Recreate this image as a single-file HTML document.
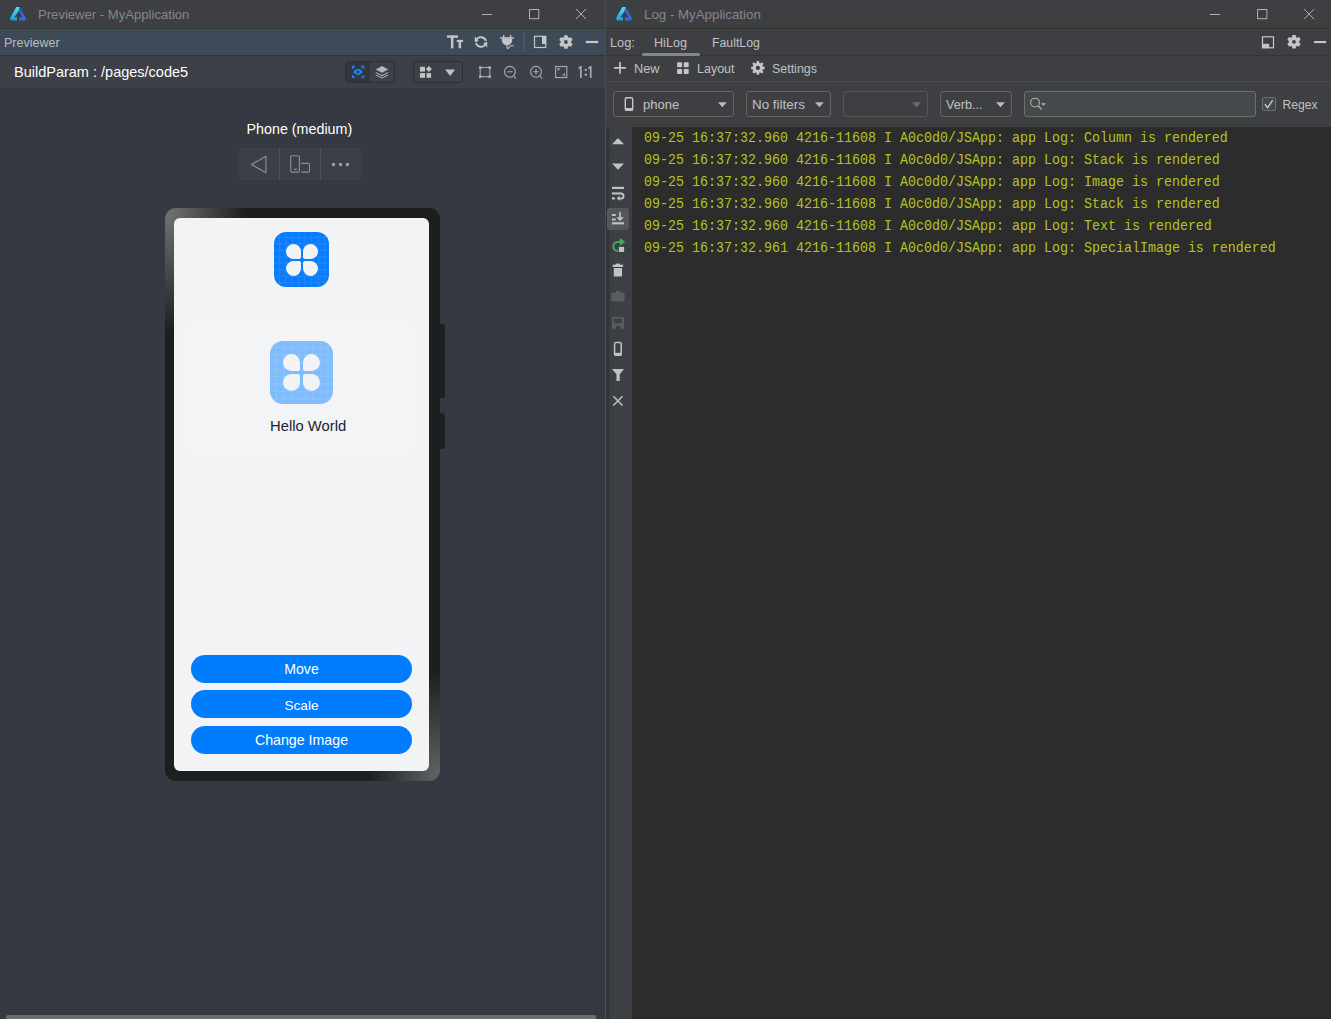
<!DOCTYPE html>
<html><head><meta charset="utf-8">
<style>
*{margin:0;padding:0;box-sizing:border-box}
html,body{width:1331px;height:1019px;overflow:hidden;background:#353941;font-family:"Liberation Sans",sans-serif}
.a{position:absolute}
.t{position:absolute;white-space:pre;line-height:1}
svg{position:absolute;left:0;top:0;overflow:visible}
.ui{color:#c0c2c4}
.lg{position:absolute;left:644px;height:22px;font-family:"Liberation Mono",monospace;font-size:13.333px;line-height:22px;color:#b3c421;white-space:pre;transform:scaleY(1.1);transform-origin:0 14px}
</style></head><body>
<!-- LEFT WINDOW -->
<div class="a" style="left:0;top:0;width:605px;height:28px;background:#3d3f43"></div>
<div class="a" style="left:0;top:28px;width:605px;height:27px;background:#3e4a57"></div>
<div class="a" style="left:0;top:27.5px;width:605px;height:1px;background:#303a2e"></div>
<div class="a" style="left:0;top:55px;width:605px;height:1px;background:#30343a"></div>
<div class="a" style="left:0;top:56px;width:605px;height:32px;background:#3d4047"></div>
<div class="a" style="left:0;top:88px;width:605px;height:931px;background:#353941"></div>
<div class="t" style="left:38px;top:8px;font-size:13.1px;color:#85878a">Previewer - MyApplication</div>
<div class="t" style="left:4px;top:37px;font-size:12.5px;color:#b9bcbf">Previewer</div>
<div class="t" style="left:14px;top:65px;font-size:14.5px;color:#ffffff">BuildParam : /pages/code5</div>
<div class="t" style="left:246.5px;top:121.5px;font-size:14.3px;color:#ffffff">Phone (medium)</div>
<!-- toolbar groups -->
<div class="a" style="left:345px;top:61px;width:50px;height:22px;border:1px solid #2c2f34;border-radius:4px;background:#3d4047;overflow:hidden"><div class="a" style="left:0;top:0;width:24px;height:20px;background:#33363c"></div></div>
<div class="a" style="left:413px;top:61px;width:50px;height:22px;border:1px solid #2c2f34;border-radius:4px"></div>
<!-- device bar -->
<div class="a" style="left:239px;top:148px;width:122px;height:32px;background:#3b3f46"></div>
<div class="a" style="left:279px;top:148px;width:1px;height:32px;background:#4c5058"></div>
<div class="a" style="left:320px;top:148px;width:1px;height:32px;background:#4c5058"></div>
<!-- scrollbar -->
<div class="a" style="left:6px;top:1015px;width:590px;height:6px;background:#6a6c6f;border-radius:2px 2px 0 0"></div>
<!-- divider -->
<div class="a" style="left:605px;top:0;width:1px;height:1019px;background:#4a4d50"></div>
<div class="a" style="left:606px;top:0;width:4px;height:1019px;background:#35373a"></div>

<!-- RIGHT WINDOW -->
<div class="a" style="left:606px;top:0;width:725px;height:127px;background:#3d3f43"></div>
<div class="a" style="left:606px;top:28px;width:725px;height:1px;background:#31382c"></div>
<div class="a" style="left:606px;top:55px;width:725px;height:1px;background:#31382c"></div>
<div class="a" style="left:606px;top:81px;width:725px;height:1px;background:#4a4b42"></div>
<div class="a" style="left:606px;top:127px;width:2.5px;height:892px;background:#333539"></div><div class="a" style="left:608.5px;top:127px;width:1.5px;height:892px;background:#393b3f"></div>
<div class="a" style="left:610px;top:127px;width:22px;height:892px;background:#3c3f44"></div>
<div class="a" style="left:607px;top:208px;width:22px;height:22px;background:#54575a;border-radius:3px"></div>
<div class="a" style="left:632px;top:127px;width:699px;height:892px;background:#2c2c2c"></div>
<div class="t" style="left:644px;top:8px;font-size:13.3px;color:#85878a">Log - MyApplication</div>
<div class="t ui" style="left:610px;top:37px;font-size:12.8px">Log:</div>
<div class="t ui" style="left:654px;top:37px;font-size:12.6px">HiLog</div>
<div class="a" style="left:642px;top:53px;width:58px;height:3px;background:#85888b;border-radius:2px"></div>
<div class="t ui" style="left:712px;top:37px;font-size:12.3px">FaultLog</div>
<div class="t ui" style="left:634px;top:63px;font-size:12.8px">New</div>
<div class="t ui" style="left:697px;top:63px;font-size:12.5px">Layout</div>
<div class="t ui" style="left:772px;top:63px;font-size:12.45px">Settings</div>

<!-- filter boxes -->
<div class="a" style="left:613px;top:91px;width:121px;height:26px;border:1px solid #62665e;border-radius:3px"></div>
<div class="t ui" style="left:643px;top:98px;font-size:13px">phone</div>
<div class="a" style="left:746px;top:91px;width:85px;height:26px;border:1px solid #62665e;border-radius:3px"></div>
<div class="t ui" style="left:752px;top:98px;font-size:13.4px">No filters</div>
<div class="a" style="left:843px;top:91px;width:85px;height:26px;border:1px solid #55584f;border-radius:3px"></div>
<div class="a" style="left:940px;top:91px;width:72px;height:26px;border:1px solid #62665e;border-radius:3px"></div>
<div class="t ui" style="left:946px;top:99px;font-size:12.6px">Verb...</div>
<div class="a" style="left:1024px;top:91px;width:232px;height:26px;border:1px solid #6b7265;border-radius:3px;background:#45494b"></div>
<div class="a" style="left:1262px;top:97px;width:14px;height:14px;border:1px solid #6d7168;border-radius:2px;background:#45484a"></div>
<div class="t ui" style="left:1282.5px;top:99px;font-size:12.1px">Regex</div>

<!-- log text -->
<div class="lg" style="top:128px">09-25 16:37:32.960 4216-11608 I A0c0d0/JSApp: app Log: Column is rendered</div>
<div class="lg" style="top:150px">09-25 16:37:32.960 4216-11608 I A0c0d0/JSApp: app Log: Stack is rendered</div>
<div class="lg" style="top:172px">09-25 16:37:32.960 4216-11608 I A0c0d0/JSApp: app Log: Image is rendered</div>
<div class="lg" style="top:194px">09-25 16:37:32.960 4216-11608 I A0c0d0/JSApp: app Log: Stack is rendered</div>
<div class="lg" style="top:216px">09-25 16:37:32.960 4216-11608 I A0c0d0/JSApp: app Log: Text is rendered</div>
<div class="lg" style="top:238px">09-25 16:37:32.961 4216-11608 I A0c0d0/JSApp: app Log: SpecialImage is rendered</div>

<!-- PHONE -->
<div class="a" style="left:440px;top:324px;width:5px;height:74px;background:#1f2021;border-radius:0 3px 3px 0"></div>
<div class="a" style="left:440px;top:413px;width:5px;height:36px;background:#1f2021;border-radius:0 3px 3px 0"></div>
<div class="a" style="left:165px;top:208px;width:274.5px;height:573px;border-radius:11px;background:radial-gradient(ellipse 80px 125px at 0px 0px,#747577 0%,rgba(29,30,32,0) 100%),radial-gradient(ellipse 70px 110px at 274px 573px,#646567 0%,rgba(29,30,32,0) 100%),#1d1e20"></div>
<div class="a" style="left:174px;top:218px;width:255px;height:553px;border-radius:6px;background:#f1f3f5"></div>
<div class="a" style="left:186px;top:322px;width:231px;height:133px;border-radius:12px;background:#f3f4f6"></div>
<div class="t" style="left:270px;top:419px;font-size:14.8px;color:#182431">Hello World</div>
<div class="a" style="left:191px;top:655px;width:221px;height:28px;border-radius:14px;background:#007dff"></div>
<div class="a" style="left:191px;top:690px;width:221px;height:28px;border-radius:14px;background:#007dff"></div>
<div class="a" style="left:191px;top:726px;width:221px;height:28px;border-radius:14px;background:#007dff"></div>
<div class="t" style="left:191px;top:662px;width:221px;text-align:center;font-size:14.1px;color:#fff">Move</div>
<div class="t" style="left:191px;top:699px;width:221px;text-align:center;font-size:13.6px;color:#fff">Scale</div>
<div class="t" style="left:191px;top:733px;width:221px;text-align:center;font-size:14.2px;color:#fff">Change Image</div>

<!-- app icons -->
<div class="a" style="left:274px;top:232px;width:55px;height:55px;border-radius:12px;background:#0a7dfe;overflow:hidden">
 <svg width="55" height="55"><g stroke="#3b97ff" stroke-width="0.8" opacity="0.55">
 <path d="M5.5 0V55M11.8 0V55M18.4 0V55M24.8 0V55M31 0V55M37.7 0V55M44.4 0V55M50.7 0V55M0 5.5H55M0 11.8H55M0 18.4H55M0 24.8H55M0 31H55M0 37.7H55M0 44.4H55M0 50.7H55"/></g></svg>
 <div class="a" style="left:11.7px;top:11.7px;width:15px;height:15px;background:#f1f3f5;border-radius:7.5px 7.5px 2px 7.5px"></div>
 <div class="a" style="left:28.7px;top:11.7px;width:15px;height:15px;background:#f1f3f5;border-radius:7.5px 7.5px 7.5px 2px"></div>
 <div class="a" style="left:11.7px;top:28.7px;width:15px;height:15px;background:#f1f3f5;border-radius:7.5px 2px 7.5px 7.5px"></div>
 <div class="a" style="left:28.7px;top:28.7px;width:15px;height:15px;background:#f1f3f5;border-radius:2px 7.5px 7.5px 7.5px"></div>
</div>
<div class="a" style="left:270px;top:341px;width:63px;height:63px;border-radius:13px;background:#7fbcfd;overflow:hidden">
 <svg width="63" height="63"><g stroke="#9ccbfd" stroke-width="0.8" opacity="0.6">
 <path d="M6.3 0V63M13.5 0V63M21 0V63M28.4 0V63M35.5 0V63M43 0V63M50.7 0V63M58 0V63M0 6.3H63M0 13.5H63M0 21H63M0 28.4H63M0 35.5H63M0 43H63M0 50.7H63M0 58H63"/></g></svg>
 <div class="a" style="left:13px;top:13px;width:17.3px;height:17.3px;background:#f1f3f5;border-radius:8.6px 8.6px 2px 8.6px"></div>
 <div class="a" style="left:32.8px;top:13px;width:17.3px;height:17.3px;background:#f1f3f5;border-radius:8.6px 8.6px 8.6px 2px"></div>
 <div class="a" style="left:13px;top:32.8px;width:17.3px;height:17.3px;background:#f1f3f5;border-radius:8.6px 2px 8.6px 8.6px"></div>
 <div class="a" style="left:32.8px;top:32.8px;width:17.3px;height:17.3px;background:#f1f3f5;border-radius:2px 8.6px 8.6px 8.6px"></div>
</div>

<!-- ICONS SVG OVERLAY -->
<svg width="1331" height="1019" viewBox="0 0 1331 1019">
 <defs>
  <linearGradient id="lg1" x1="0" y1="0" x2="0" y2="1"><stop offset="0" stop-color="#4fe3ec"/><stop offset="1" stop-color="#159fdb"/></linearGradient>
  <linearGradient id="lg2" x1="0" y1="0" x2="1" y2="1"><stop offset="0" stop-color="#1f5fd0"/><stop offset="1" stop-color="#3e6ee6"/></linearGradient>
 </defs>
 <!-- logos -->
 <g id="logo">
  <path d="M16.3 7.1H19.8L18.5 11.3L14.3 17.3H17V20.4H11.2L9.9 18.6Z" fill="url(#lg1)"/>
  <path d="M19.8 7.1L26 18.6L24.8 20.4H18.9V17.3H22.6L18.5 11.3Z" fill="url(#lg2)"/>
 </g>
 <use href="#logo" x="606" y="0"/>
 <!-- window controls left -->
 <g stroke="#b0b2b4" stroke-width="1" fill="none">
  <path d="M482 14.5H492.2"/>
  <rect x="529.5" y="9.5" width="9.3" height="9.2"/>
  <path d="M576 9L586 19M586 9L576 19"/>
  <path d="M1209.8 14.5H1220.2"/>
  <rect x="1257.6" y="9.5" width="9.3" height="9.2"/>
  <path d="M1304 9L1314.2 19.2M1314.2 9L1304 19.2"/>
 </g>
 <!-- previewer header icons -->
 <g fill="#c3c5c7">
  <rect x="447" y="35.4" width="11" height="2.4"/><rect x="450.9" y="35.4" width="2.5" height="13"/>
  <rect x="456.7" y="39.9" width="6.3" height="2.1"/><rect x="458.6" y="39.9" width="2.5" height="8.4"/>
 </g>
 <g stroke="#c3c5c7" stroke-width="1.8" fill="none">
  <path d="M476.3 40.2A5.2 5.2 0 0 1 486 41"/>
  <path d="M485.7 43.8A5.2 5.2 0 0 1 476 43"/>
 </g>
 <g fill="#c3c5c7">
  <path d="M474.8 36.2L478.6 40.9L474.8 42.2Z"/>
  <path d="M487.2 47.8L483.4 43.1L487.2 41.8Z"/>
  <rect x="503" y="35" width="1.4" height="3"/><rect x="509.9" y="35" width="1.4" height="3"/>
  <rect x="500" y="37.2" width="14" height="1.3"/>
  <path d="M501.8 38.3H512.2V40A5.2 5.2 0 0 1 501.8 40Z"/>
 </g>
 <path d="M507 43.5V47.4Q507.2 49.1 508.4 48.1L510.6 45.7H513.8" stroke="#c3c5c7" stroke-width="1.1" fill="none"/>
 <rect x="523.3" y="32" width="1" height="20" fill="#566170"/>
 <rect x="534.5" y="36.3" width="11.2" height="11.2" stroke="#c3c5c7" stroke-width="1.2" fill="none"/>
 <rect x="542" y="36" width="4.2" height="8" fill="#c3c5c7"/>
 <path id="gear" fill="#c3c5c7" fill-rule="evenodd" transform="translate(565.9 42)" d="M-2.07 -4.66 L-1.57 -6.82 L1.57 -6.82 L2.07 -4.66 L3.00 -4.13 L5.12 -4.77 L6.69 -2.05 L5.07 -0.53 L5.07 0.53 L6.69 2.05 L5.12 4.77 L3.00 4.13 L2.07 4.66 L1.57 6.82 L-1.57 6.82 L-2.07 4.66 L-3.00 4.13 L-5.12 4.77 L-6.69 2.05 L-5.07 0.53 L-5.07 -0.53 L-6.69 -2.05 L-5.12 -4.77 L-3.00 -4.13Z M-1.90 0.00a1.9 1.9 0 1 0 3.8 0a1.9 1.9 0 1 0 -3.8 0Z"/>
 <rect x="585.8" y="40.9" width="12.4" height="2.2" fill="#c3c5c7"/>
 <!-- toolbar icons -->
 <g stroke="#1f7ff0" stroke-width="1.6" fill="none">
  <path d="M352.7 69V66.6H355M361.2 66.6H363.5V69M363.5 75V77.3H361.2M355 77.3H352.7V75"/>
 </g>
 <path d="M353 72Q358 65.6 363 72Q358 78.4 353 72Z" fill="#1f7ff0"/>
 <circle cx="358" cy="72" r="1.2" fill="#33302c"/>
 <g fill="#c3c5c7">
  <path d="M382 66L388.2 69.4L382 72.8L375.8 69.4Z" fill="#b4b6b9"/>
  <path d="M375.8 71.9L382 75.1L388.2 71.9V73.1L382 76.3L375.8 73.1Z" fill="#b4b6b9"/>
  <path d="M375.8 74.4L382 77.6L388.2 74.4V75.4L382 78.6L375.8 75.4Z" fill="#b4b6b9"/>
 </g>
 <g fill="#c0c2c4">
  <rect x="420" y="66.8" width="5" height="4.8"/><rect x="420" y="73.1" width="5" height="4.7"/><rect x="426.5" y="73.1" width="4.6" height="4.7"/>
  <path d="M428.9 66L431.9 69L428.9 72L425.9 69Z"/>
  <path d="M445.2 69.5H455.1L450.15 76Z"/>
 </g>
 <g stroke="#a9abae" stroke-width="1.1" fill="none">
  <rect x="480.2" y="67.5" width="9.6" height="9.2"/>
  <circle cx="509.9" cy="71.8" r="5.4"/><path d="M513.8 75.7L516 78.8M507.3 71.8H512.5"/>
  <circle cx="536" cy="71.8" r="5.4"/><path d="M539.9 75.7L542.1 78.8M533.4 71.8H538.6M536 69.2V74.4"/>
  <rect x="555.6" y="66.5" width="11.2" height="11"/><path d="M558 70.8V68.9H560M564.4 73.3V75.2H562.4"/>
 </g>
 <g fill="#a9abae"><rect x="479" y="66.3" width="2.6" height="2.6"/><rect x="488.4" y="66.3" width="2.6" height="2.6"/><rect x="479" y="75.4" width="2.6" height="2.6"/><rect x="488.4" y="75.4" width="2.6" height="2.6"/></g>
 <g fill="#a6a8ab"><path d="M580 65.9H581.7V77.9H580V68.4L578.4 69.2V67.8Z"/><rect x="584.7" y="68.9" width="2.2" height="2"/><rect x="584.7" y="73.7" width="2.2" height="2.1"/><path d="M589.9 65.9H591.6V77.9H589.9V68.4L588.3 69.2V67.8Z"/></g>
 <!-- device bar icons -->
 <path d="M265.9 156.3V172.8L251.5 164.5Z" stroke="#8f9296" stroke-width="1.1" fill="none" stroke-linejoin="round"/>
 <g stroke="#8f9296" stroke-width="1.1" fill="none">
  <rect x="290.7" y="155.7" width="8.7" height="16.4" rx="1.3"/>
  <path d="M301.2 163.4H308.3A1.2 1.2 0 0 1 309.5 164.6V170.9A1.2 1.2 0 0 1 308.3 172.1H301.2"/>
  <path d="M294 169.4H296.8" stroke-width="1.3"/>
 </g>
 <g fill="#9a9da1"><circle cx="333.5" cy="164.6" r="1.8"/><circle cx="340.5" cy="164.6" r="1.8"/><circle cx="347.5" cy="164.6" r="1.8"/></g>
 <!-- right header icons -->
 <g fill="#c3c5c7">
  <rect x="614" y="67" width="12" height="1.7"/><rect x="619.1" y="62" width="1.7" height="11.7"/>
  <rect x="677.1" y="62.3" width="5" height="5" rx="0.8"/><rect x="683.7" y="62.3" width="5" height="5" rx="0.8"/><rect x="677.1" y="69" width="5" height="5" rx="0.8"/><rect x="683.7" y="69" width="5" height="5" rx="0.8"/>
 </g>
 <path fill="#c3c5c7" fill-rule="evenodd" transform="translate(757.9 67.9)" d="M-1.49 -4.88 L-1.08 -6.82 L1.08 -6.82 L1.49 -4.88 L2.39 -4.50 L4.06 -5.58 L5.58 -4.06 L4.50 -2.39 L4.88 -1.49 L6.82 -1.08 L6.82 1.08 L4.88 1.49 L4.50 2.39 L5.58 4.06 L4.06 5.58 L2.39 4.50 L1.49 4.88 L1.08 6.82 L-1.08 6.82 L-1.49 4.88 L-2.39 4.50 L-4.06 5.58 L-5.58 4.06 L-4.50 2.39 L-4.88 1.49 L-6.82 1.08 L-6.82 -1.08 L-4.88 -1.49 L-4.50 -2.39 L-5.58 -4.06 L-4.06 -5.58 L-2.39 -4.50Z M-2.10 0.00a2.1 2.1 0 1 0 4.2 0a2.1 2.1 0 1 0 -4.2 0Z"/>
 <rect x="1262.5" y="36.8" width="11" height="11" stroke="#c3c5c7" stroke-width="1.2" fill="none"/>
 <rect x="1262" y="43.8" width="7.2" height="4.4" fill="#c3c5c7"/>
 <use href="#gear" x="728.1" y="-0.2"/>
 <rect x="1314" y="41" width="12.2" height="2.1" fill="#c3c5c7"/>
 <!-- filter row icons -->
 <rect x="625.3" y="97.7" width="7.4" height="12.6" rx="1.4" stroke="#c3c5c7" stroke-width="1.4" fill="none"/>
 <rect x="625" y="108" width="8" height="2.6" fill="#c3c5c7"/>
 <g fill="#b9bbbd">
  <path d="M718 102.3H726.7L722.35 107.2Z"/>
  <path d="M815 102.3H823.8L819.4 107.2Z"/>
  <path d="M912 102.3H921L916.5 107.2Z" fill="#6a6c6e"/>
  <path d="M996 102.3H1005L1000.5 107.2Z"/>
  <path d="M1041 103.3H1045.8L1043.4 105.8Z"/>
 </g>
 <circle cx="1035" cy="102.6" r="4.4" stroke="#b0b2b4" stroke-width="1.1" fill="none"/>
 <path d="M1038.2 105.8L1041.5 109.4" stroke="#b0b2b4" stroke-width="1.4"/>
 <path d="M1265 104.3L1267.6 107.8L1272.6 100.3" stroke="#c8cacc" stroke-width="1.5" fill="none"/>
 <!-- gutter icons -->
 <g fill="#c0c2c4">
  <path d="M612 144.2H624L618 138.1Z"/>
  <path d="M612 163.6H624L618 169.7Z"/>
  <rect x="612" y="186.8" width="12" height="2.2"/>
  <rect x="612" y="192.4" width="9" height="2.1"/>
  <rect x="612" y="197.3" width="2.9" height="2.2"/>
  <path d="M619.5 195.5L616.8 198.3L619.5 201Z"/>
  <rect x="612" y="214" width="3.7" height="2"/><rect x="612" y="218.5" width="3.7" height="2"/><rect x="612" y="222.2" width="12" height="2.2"/>
  <rect x="619.3" y="211.8" width="1.6" height="7"/>
  <path d="M616.3 217.2H623.9L620.1 221Z"/>
  <rect x="615.6" y="263.6" width="4.4" height="1.6"/>
  <rect x="612.7" y="264.7" width="10.4" height="2.3"/>
  <path d="M613.8 268H622V275.4A1.2 1.2 0 0 1 620.8 276.6H615A1.2 1.2 0 0 1 613.8 275.4Z"/>
  <path d="M612 369H624L619.7 374.2V381H616.5V374.2Z"/>
 </g>
 <path d="M621 193.5A2.5 2.5 0 0 1 621 198.5H618.5" stroke="#c0c2c4" stroke-width="2" fill="none"/>
 <path d="M617.9 251A4.55 4.55 0 0 1 617.9 241.9H620.5" stroke="#4aab55" stroke-width="2" fill="none"/>
 <path d="M619.9 238L625.3 241.9L619.9 245.8Z" fill="#4aab55"/>
 <rect x="618.9" y="246.9" width="5.2" height="5.1" fill="#c0c2c4"/>
 <g fill="#595b5e">
  <path d="M612.4 292.5H615.8L616.6 290.8H620L620.8 292.5H623.6A1 1 0 0 1 624.6 293.5V300.6A1 1 0 0 1 623.6 301.6H612.2A1 1 0 0 1 611.2 300.6V293.5A1 1 0 0 1 612.2 292.5Z"/>
  <path fill-rule="evenodd" d="M612 316.9H624V328.8H612Z M614 318.8V323.3H621.8V318.8Z M616 326V328.8H620.5V326Z"/>
 </g>
 <rect x="614.6" y="342.6" width="6.6" height="12.6" rx="1.3" stroke="#c0c2c4" stroke-width="1.5" fill="none"/>
 <rect x="614.4" y="352.8" width="7" height="2.8" fill="#c0c2c4"/>
 <path d="M613.3 396.2L622.5 405.6M622.5 396.2L613.3 405.6" stroke="#c0c2c4" stroke-width="1.5"/>
</svg>
</body></html>
